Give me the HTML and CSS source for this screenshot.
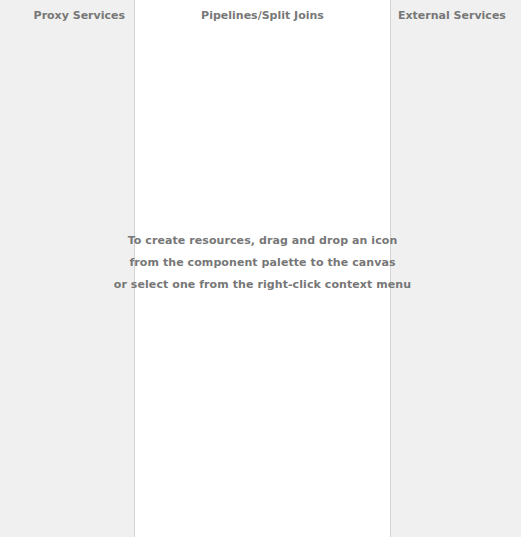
FILE: index.html
```html
<!DOCTYPE html>
<html>
<head>
<meta charset="utf-8">
<link rel="stylesheet" href="styles.css">
</head>
<body>
<div class="board">
  <div class="lane lane-left"><div class="lane-title">Proxy Services</div></div>
  <div class="lane lane-mid"><div class="lane-title">Pipelines/Split Joins</div></div>
  <div class="lane lane-right"><div class="lane-title">External Services</div></div>
  <div class="hint">
    <div>To create resources, drag and drop an icon</div>
    <div>from the component palette to the canvas</div>
    <div>or select one from the right-click context menu</div>
  </div>
</div>
</body>
</html>
```
FILE: styles.css
```css
html, body {
  margin: 0;
  padding: 0;
  height: 100%;
}
body {
  font-family: "DejaVu Sans", sans-serif;
  font-weight: bold;
  font-size: 11px;
  color: #777777;
}
.board {
  position: relative;
  display: flex;
  height: 100%;
  background: #f0f0f0;
}
.lane {
  box-sizing: border-box;
}
.lane-left {
  width: 135px;
  border-right: 1px solid #d4d4d4;
  text-align: right;
  padding-right: 9px;
}
.lane-mid {
  width: 256px;
  background: #ffffff;
  border-right: 1px solid #d4d4d4;
  text-align: center;
}
.lane-right {
  flex: 1;
  padding-left: 7px;
}
.lane-title {
  padding-top: 9px;
  line-height: 14px;
}
.hint {
  position: absolute;
  left: 0;
  right: 0;
  top: 230px;
  text-align: center;
  line-height: 22px;
  letter-spacing: 0.08px;
  padding-left: 4px;
}
```
